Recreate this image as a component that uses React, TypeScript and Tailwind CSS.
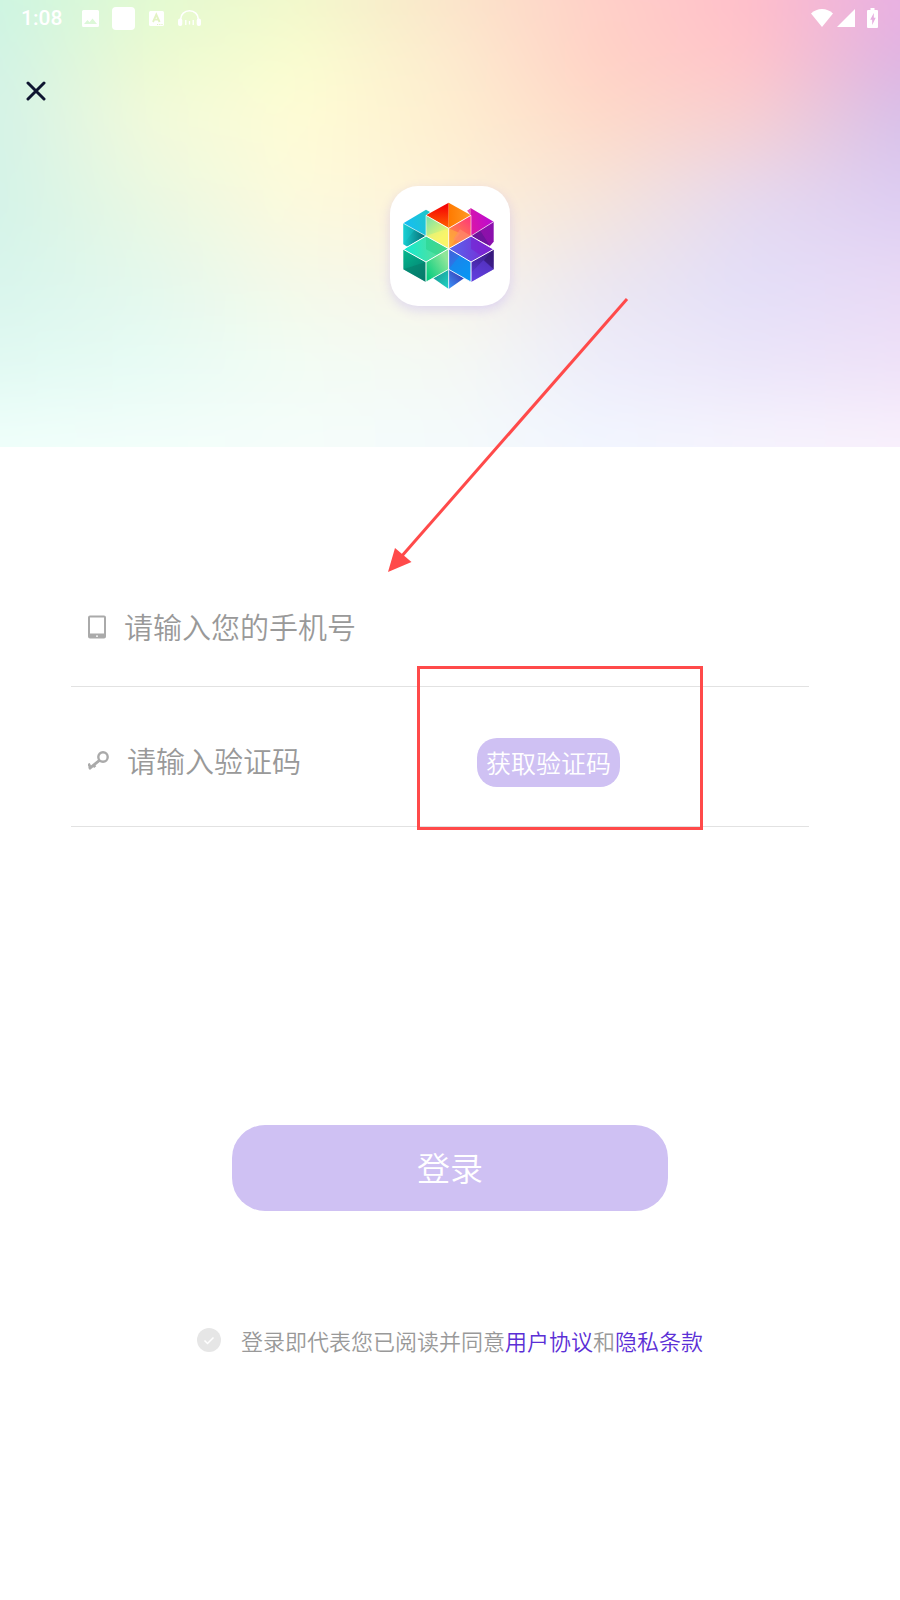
import { useState } from 'react'

// 顶部背景: 每行一组横向颜色，行与行之间上下渐变
const meshRows = [
  { y: 0, colors: ['#cdf5e2', '#e2fad2', '#f2f8cb', '#fbe5ca', '#ffd0c8', '#ffbeca', '#e9b0e3'] },
  { y: 60, colors: ['#d2f3e5', '#ecfad2', '#fafdd0', '#fdebcf', '#ffd2c6', '#ffc4ca', '#dfb4e2'] },
  { y: 120, colors: ['#d5f2e7', '#f2fadb', '#fffcd5', '#feeed0', '#fedac9', '#f6cfd2', '#d8c1ea'] },
  { y: 200, colors: ['#d4f3e8', '#eaf8e2', '#fdfadc', '#fef1d8', '#f5e4db', '#e5d9ef', '#ddcdf2'] },
  { y: 280, colors: ['#d8f5ec', '#e4f8ec', '#f5f9e8', '#f8f4e8', '#ebe6f0', '#e3def8', '#e8d9f5'] },
  { y: 360, colors: ['#e0f9f2', '#e7fbf4', '#f2fcf4', '#f5f9f4', '#edecfa', '#ebe5f9', '#eee1f8'] },
  { y: 447, colors: ['#f0fffb', '#f3fefb', '#f5fdfb', '#f4fafc', '#f2f6ff', '#f6f4fd', '#f9f1fc'] },
]

const MeshBackground = () => (
  <svg className="absolute inset-0 h-full w-full" viewBox="0 0 900 447" preserveAspectRatio="none" aria-hidden="true">
    <defs>
      {meshRows.map((row, i) => (
        <linearGradient key={row.y} id={`row${i}`} gradientUnits="userSpaceOnUse" x1="0" x2="900" y1="0" y2="0">
          {row.colors.map((c, j) => (
            <stop key={j} offset={j / (row.colors.length - 1)} stopColor={c} />
          ))}
        </linearGradient>
      ))}
      {meshRows.slice(1).map((row, i) => (
        <linearGradient key={row.y} id={`fade${i + 1}`} gradientUnits="userSpaceOnUse" x1="0" x2="0" y1={meshRows[i].y} y2={row.y}>
          <stop offset="0" stopColor="#000" />
          <stop offset="1" stopColor="#fff" />
        </linearGradient>
      ))}
      {meshRows.slice(1).map((row, i) => (
        <mask key={row.y} id={`mask${i + 1}`} maskUnits="userSpaceOnUse" x="-100" y="-100" width="1100" height="647">
          <rect x="-100" y="-100" width="1100" height="647" fill={`url(#fade${i + 1})`} />
        </mask>
      ))}
      <filter id="soften" filterUnits="userSpaceOnUse" x="-100" y="-100" width="1100" height="647" colorInterpolationFilters="sRGB">
        <feGaussianBlur stdDeviation="24" />
      </filter>
    </defs>
    {/* 四周多画一圈，模糊后边缘不会变淡 */}
    <g filter="url(#soften)">
      {meshRows.map((row, i) => (
        <rect key={row.y} x="-100" y="-100" width="1100" height="647" fill={`url(#row${i})`} mask={i > 0 ? `url(#mask${i})` : undefined} />
      ))}
    </g>
  </svg>
)

const logoGradients: [string, number, number, number, number, string, string][] = [
  ['cyanTop', 70, 140, 140, 110, '#14bdf5', '#20c6cc'],
  ['cyanLeft', 70, 0, 138, 0, '#17cdd0', '#05696f'],
  ['pinkTop', 273, 150, 341, 130, '#d915a8', '#b90ad6'],
  ['pinkLeft', 273, 0, 341, 0, '#8d14a2', '#8b0fae'],
  ['redL', 180, 90, 180, 150, '#f50505', '#ff5a00'],
  ['redR', 206, 0, 273, 0, '#ff7a00', '#ff9a26'],
  ['yelL', 138, 130, 185, 185, '#7fe3a8', '#f0f868'],
  ['yelR', 270, 130, 206, 205, '#ff3b78', '#ffa32e'],
  ['grnTop', 75, 220, 206, 215, '#12ead2', '#6fdc88'],
  ['grnL', 70, 230, 138, 310, '#04b58c', '#04786e'],
  ['grnR', 140, 300, 206, 260, '#06cd80', '#8fe699'],
  ['purTop', 206, 218, 341, 220, '#5668ef', '#8021cf'],
  ['purL', 206, 230, 273, 300, '#3f63dc', '#0698f6'],
  ['purR', 320, 230, 285, 310, '#3c1d8c', '#5b3bd8'],
  ['botL', 160, 300, 206, 335, '#199d98', '#1fd2c3'],
  ['botR', 206, 330, 250, 290, '#3a8df5', '#3a35ae'],
]

const logoFaces: [string, string][] = [
  ['138,101 150,108 138,118 138,180 70,142', 'cyanTop'],
  ['70,142 138,180 82,212 70,205', 'cyanLeft'],
  ['262,104 273,97 341,137 273,180 273,118', 'pinkTop'],
  ['341,137 341,197 330,210 273,180', 'pinkLeft'],
  ['206,80 206,157 138,118', 'redL'],
  ['206,80 273,118 206,157', 'redR'],
  ['138,118 206,157 206,218 138,180', 'yelL'],
  ['273,118 273,180 206,218 206,157', 'yelR'],
  ['206,280 206,339 160,307', 'botL'],
  ['206,280 252,307 206,339', 'botR'],
  ['138,180 206,218 138,258 70,220', 'grnTop'],
  ['70,220 138,258 138,318 70,280', 'grnL'],
  ['206,218 206,280 138,318 138,258', 'grnR'],
  ['273,180 341,220 273,258 206,218', 'purTop'],
  ['206,218 273,258 273,318 206,280', 'purL'],
  ['341,220 341,280 273,318 273,258', 'purR'],
]

const Logo = () => (
  <svg className="h-full w-full" viewBox="30 30 360 360" role="img" aria-label="logo">
    <defs>
      {logoGradients.map(([id, x1, y1, x2, y2, from, to]) => (
        <linearGradient key={id} id={id} gradientUnits="userSpaceOnUse" x1={x1} y1={y1} x2={x2} y2={y2}>
          <stop offset="0" stopColor={from} />
          <stop offset="1" stopColor={to} />
        </linearGradient>
      ))}
    </defs>
    {logoFaces.map(([points, id]) => (
      <polygon key={id} points={points} fill={`url(#${id})`} />
    ))}
    {/* 面上的明暗 */}
    <g>
      <polygon points="70,142 104,161 70,205" fill="#1bd5dc" opacity="0.3" />
      <polygon points="138,180 206,157 206,218" fill="#fff36a" opacity="0.6" />
      <polygon points="206,157 240,172 206,218" fill="#ffb03a" opacity="0.6" />
      <polygon points="240,160 273,180 240,199 220,190" fill="#ff8a6b" opacity="0.7" />
      <polygon points="138,180 206,218 170,236 138,220" fill="#1fcf86" opacity="0.45" />
      <polygon points="70,280 138,258 138,318" fill="#067a68" opacity="0.5" />
      <polygon points="273,180 273,218 305,240 341,220" fill="#7a1fd0" opacity="0.6" />
      <polygon points="206,280 240,238 273,258 273,318" fill="#0a95f2" opacity="0.6" />
      <polygon points="341,220 341,280 312,252" fill="#35156f" opacity="0.55" />
      <polygon points="273,318 273,290 310,253 341,280" fill="#6440e0" opacity="0.5" />
      <polygon points="273,180 300,163 330,210" fill="#4d168f" opacity="0.5" />
      <polygon points="262,104 273,97 273,118" fill="#e05bb5" />
    </g>
    <g fill="none" stroke="#fff" strokeWidth="3" strokeLinejoin="round">
      <path d="M138 118 206 157 273 118M206 157V218" strokeOpacity="0.85" />
      <path d="M70 142 138 180M273 180 341 137M273 118V180M138 118V180" strokeOpacity="0.6" />
      <path d="M70 220 138 180 206 218 273 180 341 220M82 212 70 220M330 210 341 220" />
      <path d="M70 220 138 258 206 218 273 258 341 220M138 258V318M273 258V318M206 218V280" />
      <path d="M138 318 206 280 273 318M206 280V339" strokeOpacity="0.8" />
    </g>
  </svg>
)

const StatusBar = () => (
  <div className="flex h-9 items-center justify-between pr-[22px] pl-[21px] text-white">
    <div className="flex items-center">
      <span className="w-[61px] font-[Roboto] text-[21px] leading-9 font-medium">1:08</span>
      <svg className="mr-[13px] h-[17px] w-[17px]" viewBox="0 0 17 17" aria-hidden="true">
        <path fill="currentColor" fillRule="evenodd" d="M1.500 0h14A1.500 1.500 0 0 1 17 1.500v14a1.500 1.500 0 0 1-1.500 1.500h-14A1.500 1.500 0 0 1 0 15.500v-14A1.500 1.500 0 0 1 1.500 0zM2 14h13l-4.500-5.500-3 3.700L5.500 10z" />
      </svg>
      <span className="mr-[14px] h-[23px] w-[23px] rounded-[4px] bg-white" />
      <svg className="mr-[14px] h-[15px] w-[15px]" viewBox="0 0 15 15" aria-hidden="true">
        <rect width="15" height="15" rx="1.500" fill="currentColor" />
        <path d="M4 11 7.300 3.500 10.600 11M5.200 8.600h4.200" fill="none" stroke="#e3f3c4" strokeWidth="1.900" />
        <path d="M8 13.500h1.200M10.200 13.500h1.200M12.400 13.500h1.200" stroke="#e3f3c4" strokeWidth="1.200" />
      </svg>
      <svg className="h-[17px] w-[23px]" viewBox="0 0 23 17" aria-hidden="true">
        <path d="M2.700 10V9a8.800 8.200 0 0 1 17.600 0v1" fill="none" stroke="currentColor" strokeWidth="1.600" />
        <rect x="0" y="8.500" width="4.300" height="7.500" rx="2" fill="currentColor" />
        <rect x="18.700" y="8.500" width="4.300" height="7.500" rx="2" fill="currentColor" />
        <path d="M7.800 10v5M11.500 11v3.500M15.200 10v5" stroke="currentColor" strokeWidth="1.300" />
      </svg>
    </div>
    <div className="flex items-center">
      <svg className="mr-1 h-[18px] w-[22px]" viewBox="0 0 22 18" aria-hidden="true">
        <path d="M11 18 0 4.500C3 1.500 7 0 11 0s8 1.500 11 4.500z" fill="currentColor" />
      </svg>
      <svg className="mr-3 h-[18px] w-[18px]" viewBox="0 0 18 18" aria-hidden="true">
        <path d="M18 0v18H0z" fill="currentColor" />
      </svg>
      <svg className="h-5 w-[11px]" viewBox="0 0 11 20" aria-hidden="true">
        <path d="M3.500 0h4v2H10a1 1 0 0 1 1 1v16a1 1 0 0 1-1 1H1a1 1 0 0 1-1-1V3a1 1 0 0 1 1-1h2.500z" fill="currentColor" />
        <path d="M6.800 5 3.200 11.700h2V17l3.500-7.200H6.800z" fill="#e6b0e0" />
      </svg>
    </div>
  </div>
)

const App = () => {
  const [phone, setPhone] = useState('')
  const [code, setCode] = useState('')
  const [agreed, setAgreed] = useState(false)

  return (
    <main className="relative min-h-screen overflow-hidden bg-white font-['Noto_Sans_CJK_SC',sans-serif] font-[350]">
      <header className="relative h-[447px]">
        <MeshBackground />
        <div className="relative">
          <StatusBar />
          <button type="button" aria-label="关闭" className="mt-[41px] ml-6 flex h-7 w-6 items-center justify-center">
            <svg className="h-5 w-5" viewBox="0 0 20 20" aria-hidden="true">
              <path d="M2 2 18 18M18 2 2 18" stroke="#0f1530" strokeWidth="3" strokeLinecap="round" />
            </svg>
          </button>
          <div className="mx-auto mt-[81px] h-[120px] w-[120px] overflow-hidden rounded-[28px] bg-white shadow-[0_4px_12px_rgba(130,90,250,0.2)]">
            <Logo />
          </div>
        </div>
      </header>

      <form className="mt-[121px] mr-[91px] ml-[71px]" onSubmit={(e) => e.preventDefault()}>
        <div className="flex h-[119px] items-center gap-[18px] border-b border-[#e2e2e2] pl-[17px]">
          <svg className="h-6 w-[18px] shrink-0" viewBox="0 0 18 24" aria-hidden="true">
            <path fill="#aaa" fillRule="evenodd" d="M2 .5h14a2 2 0 0 1 2 2v19a2 2 0 0 1-2 2H2a2 2 0 0 1-2-2v-19a2 2 0 0 1 2-2zM2 2.500v16h14v-16zM8 20.500v1.200h2v-1.200z" />
          </svg>
          <input
            type="tel"
            aria-label="手机号"
            placeholder="请输入您的手机号"
            value={phone}
            onChange={(e) => setPhone(e.target.value)}
            className="mb-0.5 min-w-0 flex-1 bg-transparent text-[29px] leading-[44px] text-[#333] outline-none placeholder:text-[#999]"
          />
        </div>
        <div className="relative flex h-[140px] items-center gap-[18px] border-b border-[#e2e2e2] pt-2 pl-[17px]">
          <svg className="h-5 w-[21px] shrink-0" viewBox="0 0 21 20" aria-hidden="true">
            <circle cx="15" cy="6" r="4.700" fill="none" stroke="#aaa" strokeWidth="2.400" />
            <path d="M11.500 9.300 1 17.800M2.200 16 .5 12.500M5.500 14l1.700 2.200" fill="none" stroke="#aaa" strokeWidth="2.800" />
          </svg>
          <input
            type="text"
            aria-label="验证码"
            placeholder="请输入验证码"
            value={code}
            onChange={(e) => setCode(e.target.value)}
            className="mb-0.5 min-w-0 flex-1 bg-transparent text-[29px] leading-[44px] text-[#333] outline-none placeholder:text-[#999]"
          />
          <button type="button" className="mt-1 mr-[189px] h-[49px] w-[143px] shrink-0 rounded-[20px] bg-[#cfc1f3] text-[25px] text-white">
            获取验证码
          </button>
          <div className="pointer-events-none absolute -top-[21px] left-[346px] h-[164px] w-[286px] border-3 border-[#ff4a4a]" />
        </div>
      </form>

      <button type="button" className="mx-auto mt-[298px] block h-[86px] w-[436px] rounded-[33px] bg-[#cfc1f3] text-[33px] text-white">
        登录
      </button>

      <div className="mt-[113px] flex items-center justify-center gap-5 text-[22px] leading-8 text-[#999]">
        <span className="relative h-6 w-6">
          <input
            id="agree"
            type="checkbox"
            checked={agreed}
            onChange={(e) => setAgreed(e.target.checked)}
            className="block h-6 w-6 appearance-none rounded-full bg-[#e6e6e6] checked:bg-[#5b2fd6]"
          />
          <svg className="pointer-events-none absolute inset-0 h-6 w-6" viewBox="0 0 24 24" aria-hidden="true">
            <path d="M7.500 12.500l3 3 6-6" fill="none" stroke="#fff" strokeWidth="1.500" />
          </svg>
        </span>
        <p>
          <label htmlFor="agree">登录即代表您已阅读并同意</label>
          <a href="#user" className="text-[#5b2fd6]">用户协议</a>和<a href="#privacy" className="text-[#5b2fd6]">隐私条款</a>
        </p>
      </div>

      {/* 指向手机号输入框的箭头 */}
      <svg className="pointer-events-none absolute top-[297px] left-[387px] h-[276px] w-[242px]" viewBox="0 0 242 276" aria-hidden="true">
        <path d="M240 2 14 260" stroke="#ff4a4a" strokeWidth="3" />
        <path d="M1 275 8 251 24.500 265z" fill="#ff4a4a" />
      </svg>
    </main>
  )
}

export default App
